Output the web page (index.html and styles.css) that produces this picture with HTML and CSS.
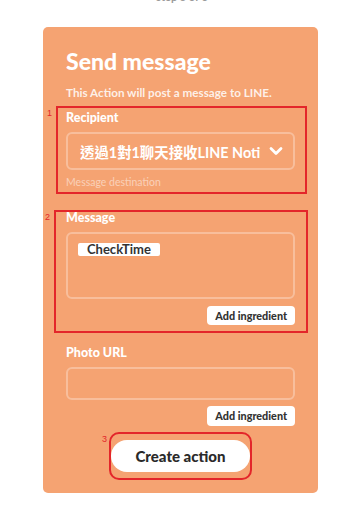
FILE: index.html
```html
<!DOCTYPE html>
<html>
<head>
<meta charset="utf-8">
<link rel="stylesheet" href="styles.css">
</head>
<body>
<div class="step">step 3 of 6</div>
<div class="card">
  <h1 class="title">Send message</h1>
  <p class="subtitle">This Action will post a message to LINE.</p>

  <div class="mark mark-1">
    <span class="num">1</span>
    <div class="label">Recipient</div>
    <div class="select">
      <span class="select-text">透過1對1聊天接收LINE Noti</span>
      <svg class="chev" width="14" height="10" viewBox="0 0 14 10"><path d="M2 2.5 L7 7.5 L12 2.5" fill="none" stroke="#fff" stroke-width="2.8" stroke-linecap="round" stroke-linejoin="round"/></svg>
    </div>
    <div class="helper">Message destination</div>
  </div>

  <div class="mark mark-2">
    <span class="num">2</span>
    <div class="label">Message</div>
    <div class="textarea"><span class="pill">CheckTime</span></div>
    <div class="row-end"><span class="ingredient">Add ingredient</span></div>
  </div>

  <div class="label label-photo">Photo URL</div>
  <div class="input"></div>
  <div class="row-end"><span class="ingredient ingredient-2">Add ingredient</span></div>

  <div class="submit-wrap">
    <div class="mark mark-3">
      <span class="num num-3">3</span>
      <button class="create">Create action</button>
    </div>
  </div>
</div>
</body>
</html>
```
FILE: styles.css
```css
html, body {
  margin: 0;
  padding: 0;
  background: #ffffff;
}
body {
  font-family: Lato, "Noto Sans", "Noto Sans CJK TC", sans-serif;
  width: 364px;
  height: 512px;
  overflow: hidden;
}
.step {
  height: 14px;
  margin-top: -10px;
  text-align: center;
  font-size: 11px;
  line-height: 14px;
  color: #9a9a9a;
  font-weight: 700;
}
.card {
  margin: 23px 0 0 43px;
  width: 229px;
  padding: 19px 23px 13px;
  background: #f5a372;
  border-radius: 5px;
  color: #fff;
}
.title {
  margin: 0;
  font-size: 23px;
  line-height: 30px;
  font-weight: 900;
}
.subtitle {
  margin: 9px 0 0;
  font-size: 11.7px;
  line-height: 14px;
  font-weight: 700;
  color: rgba(255,255,255,0.85);
}
.mark {
  position: relative;
  border: 2px solid #e3262a;
}
.num {
  position: absolute;
  left: -11px;
  top: 0px;
  font-size: 9px;
  line-height: 10px;
  color: #e3262a;
  font-family: "Liberation Sans", sans-serif;
}
.mark-1 {
  margin: 7px -12px 0 -10px;
  padding: 3px 10px 4px 8px;
}
.mark-2 {
  margin: 16px -13px 0 -12px;
  padding: 0 11px 6px 10px;
}
.label {
  font-size: 12.5px;
  line-height: 14px;
  font-weight: 900;
}
.mark-2 .label {
  line-height: 12px;
}
.select {
  margin-top: 7px;
  height: 34px;
  border: 2px solid rgba(255,255,255,0.3);
  border-radius: 6px;
  display: flex;
  align-items: center;
  padding: 0 10px 0 12px;
  gap: 6px;
}
.select-text {
  flex: 1;
  overflow: hidden;
  white-space: nowrap;
  font-family: Lato, "Noto Sans CJK TC", sans-serif;
  font-size: 14.4px;
  font-weight: 700;
}
.chev {
  flex: none;
}
.helper {
  margin-top: 6px;
  font-size: 10.5px;
  line-height: 12px;
  color: rgba(255,255,255,0.5);
}
.textarea {
  margin-top: 8px;
  border: 2px solid rgba(255,255,255,0.3);
  border-radius: 6px;
  padding: 9px 10px;
  box-sizing: border-box;
  height: 67px;
  display: flex;
  align-items: flex-start;
}
.pill {
  display: block;
  background: #fff;
  color: #333;
  font-size: 13px;
  line-height: 13px;
  font-weight: 700;
  padding: 0 9px;
  border-radius: 2px;
}
.row-end {
  display: flex;
  justify-content: flex-end;
}
.ingredient {
  margin-top: 7px;
  background: #fff;
  color: #333;
  font-size: 10.8px;
  font-weight: 900;
  height: 19px;
  line-height: 19px;
  padding: 0 8px;
  border-radius: 4px;
}
.ingredient-2 {
  margin-top: 6px;
  height: 20px;
  line-height: 20px;
}
.label-photo {
  margin-top: 14px;
  line-height: 12px;
}
.input {
  margin-top: 8px;
  height: 29px;
  border: 2px solid rgba(255,255,255,0.3);
  border-radius: 6px;
}
.submit-wrap {
  display: flex;
  justify-content: center;
  margin-top: 6px;
}
.mark-3 {
  padding: 6px 0;
  border-radius: 10px;
  width: 139px;
}
.num-3 {
  left: -9px;
  top: 0;
}
.create {
  display: block;
  width: 139px;
  height: 32px;
  border: none;
  border-radius: 16px;
  background: #fff;
  color: #2a2a2a;
  font-family: Lato, "Noto Sans", sans-serif;
  font-size: 15px;
  font-weight: 900;
  padding: 0;
}
```
